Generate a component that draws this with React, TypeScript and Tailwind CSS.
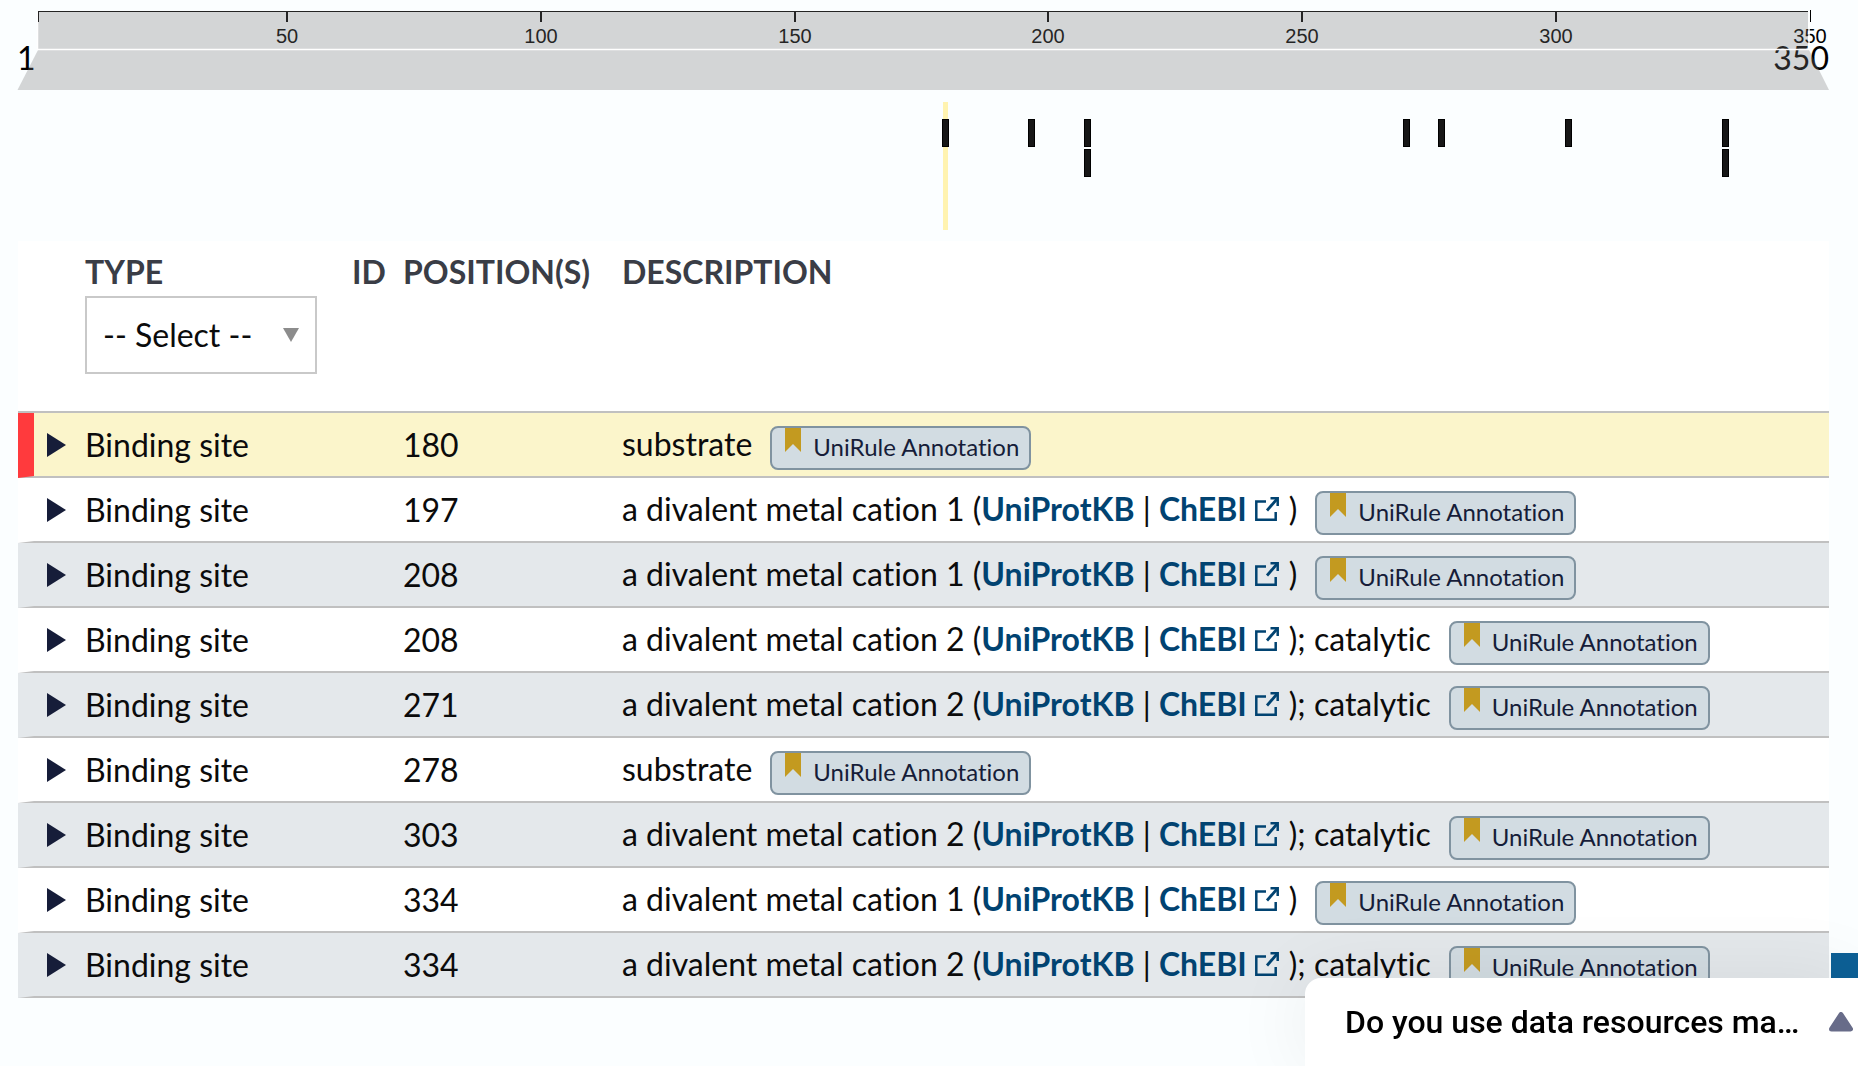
import React from "react";

type Ligand = { cation: 1 | 2; catalytic?: boolean };
type Feature = { position: number; ligand?: Ligand; selected?: boolean };

const features: Feature[] = [
  { position: 180, selected: true },
  { position: 197, ligand: { cation: 1 } },
  { position: 208, ligand: { cation: 1 } },
  { position: 208, ligand: { cation: 2, catalytic: true } },
  { position: 271, ligand: { cation: 2, catalytic: true } },
  { position: 278 },
  { position: 303, ligand: { cation: 2, catalytic: true } },
  { position: 334, ligand: { cation: 1 } },
  { position: 334, ligand: { cation: 2, catalytic: true } },
];

const ticks = [
  { label: "50", x: 287 },
  { label: "100", x: 541 },
  { label: "150", x: 795 },
  { label: "200", x: 1048 },
  { label: "250", x: 1302 },
  { label: "300", x: 1556 },
];

const marks = [
  { x: 942, y: 119 },
  { x: 1028, y: 119 },
  { x: 1084, y: 119 },
  { x: 1084, y: 149 },
  { x: 1403, y: 119 },
  { x: 1438, y: 119 },
  { x: 1565, y: 119 },
  { x: 1722, y: 119 },
  { x: 1722, y: 149 },
];

function SequenceTrack() {
  return (
    <svg viewBox="0 0 1858 241" className="block w-full" role="img" aria-label="Sequence positions 1 to 350">
      <g className="font-['Liberation_Sans'] text-[20px]" textAnchor="middle" fill="#000">
        {ticks.map((t) => (
          <text key={t.label} x={t.x} y="43">
            {t.label}
          </text>
        ))}
        <text x="1810" y="43">350</text>
      </g>
      <g className="font-['Lato'] text-[32px]" fill="#000">
        <text x="17" y="70">1</text>
        <text x="1829" y="70" textAnchor="end">350</text>
      </g>
      <rect x="38" y="11" width="1770" height="38" fill="#777" fillOpacity="0.3" />
      <path d="M38 50H1809L1829 90H17.500z" fill="#777" fillOpacity="0.3" />
      <path d="M37.500 12V49.500H1809V12" fill="none" stroke="#fff" strokeWidth="1.500" />
      <g fill="#242424">
        <rect x="38" y="11" width="1770" height="1" />
        <rect x="38" y="11" width="1" height="11" />
        <rect x="1810" y="10" width="1" height="12" fill="#000" />
        {ticks.map((t) => (
          <rect key={t.label} x={t.x - 1} y="11" width="2" height="11" />
        ))}
      </g>
      <rect x="943" y="102" width="5" height="128" fill="#fff3b0" />
      {marks.map((m, i) => (
        <rect key={i} x={m.x + 0.5} y={m.y + 0.5} width="6" height="27" fill="#171717" stroke="#000" />
      ))}
    </svg>
  );
}

function ExternalIcon() {
  return (
    <svg viewBox="0 0 24 24" className="ml-2 inline-block size-6 align-baseline" fill="none" stroke="#014371" strokeWidth="2.500" aria-hidden="true">
      <path d="M11 4.500H1.300V22.700H20.700V15" />
      <path d="M12 13.500L22 2" strokeWidth="2.800" />
      <path d="M15.500 1.300H22.700V9" />
    </svg>
  );
}

function EvidenceTag() {
  return (
    <button
      type="button"
      className="mt-0.5 ml-[18px] flex h-11 items-start rounded-lg border-2 border-[#8093a0] bg-[#d2dce2] pr-[10px] pl-[13px] text-2xl leading-[38px] text-[#161d39]"
    >
      <svg viewBox="0 0 16 24" className="mr-3 h-6 w-4" aria-hidden="true">
        <path d="M0 0H16V24L8 16 0 24z" fill="#c39a20" />
      </svg>
      UniRule Annotation
    </button>
  );
}

function Description({ ligand }: { ligand?: Ligand }) {
  if (!ligand) return <span>substrate</span>;
  return (
    <span>
      {`a divalent metal cation ${ligand.cation} (`}
      <a href="#uniprotkb" className="font-bold text-[#014371]">UniProtKB</a>
      {" | "}
      <a href="#chebi" className="mr-[10px] font-bold text-[#014371]">
        ChEBI
        <ExternalIcon />
      </a>
      {ligand.catalytic ? "); catalytic" : ")"}
    </span>
  );
}

function rowColour(f: Feature, i: number) {
  if (f.selected) return "bg-[#fbf5cb]";
  return i % 2 === 0 ? "bg-[#e4e8eb]" : "bg-white";
}

const cell = "h-[65px] border-b-2 border-[#c0c0c0] p-0 align-top";
const textCell = `${cell} pt-3`;
const head = "h-[172px] border-b-2 border-[#c0c0c0] p-0 pt-[11px] text-left align-top font-bold";

export default function App() {
  return (
    <main className="min-h-screen bg-[#fbfeff] font-['Lato',sans-serif] text-[32px] leading-10 text-[#0b0b0b] [font-variant-ligatures:none]">
      <SequenceTrack />
      <div className="pr-[29px] pl-[18px]">
        <table className="w-full table-fixed border-separate border-spacing-0 bg-white">
          <colgroup>
            <col className="w-[67px]" />
            <col className="w-[267px]" />
            <col className="w-[51px]" />
            <col className="w-[219px]" />
            <col />
          </colgroup>
          <thead className="text-[#3a3d46]">
            <tr>
              <td className={head}></td>
              <th className={head}>
                <label htmlFor="type-filter" className="block">TYPE</label>
                <div className="relative mt-1 w-[232px]">
                  <select
                    id="type-filter"
                    className="h-[78px] w-full appearance-none border-2 border-[#c9c9c9] bg-white pl-4 font-normal text-[#0b0b0b]"
                  >
                    <option>-- Select --</option>
                  </select>
                  <svg viewBox="0 0 16 14" className="pointer-events-none absolute top-8 right-[18px] h-3.5 w-4" aria-hidden="true">
                    <path d="M0 0H16L8 14z" fill="#8c8c8c" />
                  </svg>
                </div>
              </th>
              <th className={head}>ID</th>
              <th className={head}>POSITION(S)</th>
              <th className={head}>DESCRIPTION</th>
            </tr>
          </thead>
          <tbody>
            {features.map((f, i) => (
              <tr key={i} className={rowColour(f, i)}>
                <td className={`${cell} border-l-[16px] pt-5 ${f.selected ? "border-l-[#ff3a3d]" : "border-l-transparent"}`}>
                  <button type="button" aria-label="Expand row" className="ml-[13px] block">
                    <svg viewBox="0 0 19 24" className="h-6 w-[19px]" aria-hidden="true">
                      <path d="M0 0L19 12 0 24z" fill="#161d39" />
                    </svg>
                  </button>
                </td>
                <td className={textCell}>Binding site</td>
                <td className={textCell}></td>
                <td className={textCell}>{f.position}</td>
                <td className={cell}>
                  <div className="flex items-start pt-[11px] whitespace-nowrap">
                    <Description ligand={f.ligand} />
                    <EvidenceTag />
                  </div>
                </td>
              </tr>
            ))}
          </tbody>
        </table>
      </div>
      <div className="fixed right-0 bottom-0 h-[113px] w-[27px] bg-[#0d6096]"></div>
      <aside className="fixed right-0 bottom-0 flex h-[88px] w-[553px] items-center justify-between rounded-tl-2xl bg-white pr-[5px] pl-10 font-['Roboto',sans-serif] font-medium text-black shadow-[0_0_80px_rgba(0,0,0,0.07)]">
        <span className="whitespace-nowrap">Do you use data resources ma…</span>
        <button type="button" aria-label="Open survey">
          <svg viewBox="0 0 24 20" className="h-5 w-6" aria-hidden="true">
            <path d="M12 2.500L21.500 17H2.500z" fill="#686c89" stroke="#686c89" strokeWidth="5" strokeLinejoin="round" />
          </svg>
        </button>
      </aside>
    </main>
  );
}
